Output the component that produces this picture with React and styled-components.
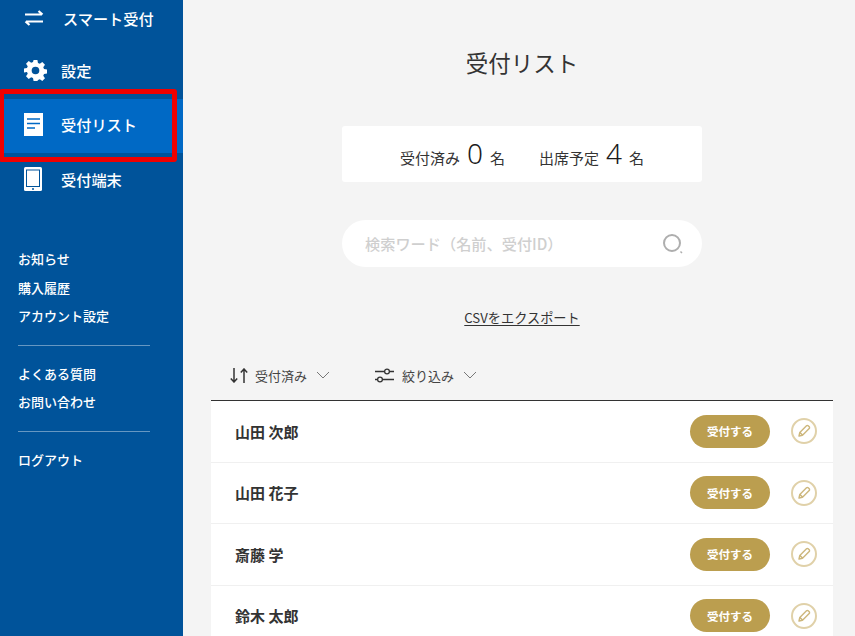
import React from "react";
import styled, { createGlobalStyle } from "styled-components";

const Global = createGlobalStyle`
  html, body { margin: 0; padding: 0; height: 100%; overflow: hidden; }
  body { font-family: "Noto Sans CJK JP", "Noto Sans", sans-serif; color: #333; background: #f4f4f4; }
  * { box-sizing: border-box; }
`;

const Page = styled.div`
  position: relative;
  display: flex;
  width: 855px;
  height: 636px;
  overflow: hidden;
`;

const Sidebar = styled.aside`
  width: 183px;
  flex: none;
  background: #00539a;
  color: #fff;
  display: flex;
  flex-direction: column;
`;

const NavList = styled.nav`
  display: flex;
  flex-direction: column;
`;

const NavItem = styled.a`
  display: flex;
  align-items: center;
  height: ${(p) => p.$h}px;
  padding: ${(p) => p.$pad || "0"};
  padding-left: 24px;
  background: ${(p) => (p.$active ? "#0069c5" : "transparent")};
  font-size: 15.2px;
  font-weight: 500;
  color: #fff;
`;

const NavIcon = styled.span`
  width: ${(p) => p.$w || 37}px;
  flex: none;
  display: flex;
  align-items: center;
  svg { display: block; }
`;

const SideLinks = styled.div`
  display: flex;
  flex-direction: column;
  padding: 39px 33px 0 18px;
`;

const SideLink = styled.a`
  display: block;
  height: 28.5px;
  line-height: 28.5px;
  font-size: 13px;
  font-weight: 500;
  color: #fff;
`;

const SideRule = styled.hr`
  border: 0;
  height: 1px;
  background: rgba(255, 255, 255, 0.4);
  margin: 14px 0;
`;

const Highlight = styled.div`
  position: absolute;
  left: -1px;
  top: 89px;
  width: 178px;
  height: 73px;
  border: 5px solid #f00000;
  border-radius: 3px;
  pointer-events: none;
`;

const Main = styled.main`
  flex: 1;
  min-width: 0;
  padding: 0 22px 0 28px;
  display: flex;
  flex-direction: column;
`;

const Title = styled.h1`
  margin: 46px 0 1px;
  height: 32px;
  line-height: 32px;
  text-align: center;
  font-size: 22.5px;
  font-weight: 400;
  color: #333;
`;

const Column = styled.div`
  width: 360px;
  align-self: center;
  display: flex;
  flex-direction: column;
`;

const Stats = styled.div`
  margin-top: 47px;
  height: 56px;
  background: #fff;
  border-radius: 3px;
  display: flex;
  justify-content: center;
  align-items: flex-start;
  gap: 34px;
  padding-top: 8px;
  font-size: 15px;
  color: #333;
`;

const Stat = styled.div`
  display: flex;
  align-items: baseline;
  gap: 7px;
`;

const StatNum = styled.span`
  font-size: 28px;
  line-height: 38px;
  font-weight: 300;
  color: #1c1c1c;
  font-family: "Noto Sans", sans-serif;
`;

const Search = styled.div`
  margin-top: 38px;
  height: 47px;
  background: #fff;
  border-radius: 24px;
  display: flex;
  align-items: center;
  justify-content: space-between;
  padding: 0 18px 0 23px;
`;

const Placeholder = styled.span`
  font-size: 15.2px;
  line-height: 20px;
  margin-top: -1px;
  color: #cfcfcf;
  font-weight: 500;
`;

const Csv = styled.a`
  margin-top: 41px;
  align-self: center;
  font-size: 13.2px;
  line-height: 19px;
  color: #333;
  text-decoration: underline;
  text-underline-offset: 2px;
`;

const Toolbar = styled.div`
  margin-top: 29px;
  height: 45px;
  flex: none;
  display: flex;
  align-items: center;
  padding: 0 0 6px 19px;
  gap: 45px;
  border-bottom: 1px solid #333;
`;

const ToolItem = styled.div`
  display: flex;
  align-items: center;
  font-size: 13px;
  color: #444;
  svg { display: block; flex: none; }
`;

const ToolLabel = styled.span`
  margin: 0 9px 0 ${(p) => p.$gap}px;
`;

const Row = styled.div`
  height: 61.5px;
  flex: none;
  background: #fff;
  display: flex;
  align-items: center;
  padding: 0 16px 0 24px;
  border-bottom: 1.5px solid #f0f0f0;
`;

const Name = styled.span`
  flex: 1;
  font-size: 15px;
  font-weight: 700;
  color: #333;
`;

const AcceptButton = styled.button`
  width: 80px;
  height: 33px;
  border: 0;
  border-radius: 17px;
  background: #bb9e4f;
  color: #fff;
  font: 700 11.5px "Noto Sans CJK JP", sans-serif;
  padding: 0;
`;

const EditButton = styled.button`
  width: 26px;
  height: 26px;
  margin-left: 21px;
  border: 2px solid #e0d1a9;
  border-radius: 50%;
  background: #fff;
  padding: 0;
  display: flex;
  align-items: center;
  justify-content: center;
`;

const Transfer = () => (
  <svg width="20" height="16" viewBox="0 0 20 16" fill="none" stroke="#fff" strokeWidth="2.2">
    <path d="M1 4.5h17M14.500 1l4 3.500M19 11.500H2M5.500 15l-4-3.500" />
  </svg>
);
const Gear = () => (
  <svg width="23" height="23" viewBox="0 0 24 24" fill="#fff">
    <path fillRule="evenodd" d="M10 1h4l.6 3.100 1.900.8 2.600-1.800 2.800 2.800-1.800 2.600.8 1.900 3.100.6v4l-3.100.6-.8 1.900 1.800 2.600-2.800 2.800-2.600-1.800-1.900.8L14 23h-4l-.6-3.100-1.900-.8-2.600 1.800-2.800-2.800 1.800-2.600-.8-1.900L0 14v-4l3.100-.6.8-1.900L2.100 4.900l2.800-2.800 2.600 1.800 1.900-.8L10 1zm2 7a4 4 0 1 0 0 8 4 4 0 0 0 0-8z" />
  </svg>
);
const Doc = () => (
  <svg width="19" height="23" viewBox="0 0 19 23">
    <rect width="19" height="23" fill="#fff" />
    <path d="M3 6h13M3 10.500h13M3 15h8" stroke="#0069c5" strokeWidth="1.500" />
  </svg>
);
const Tablet = () => (
  <svg width="18" height="24" viewBox="0 0 18 24">
    <rect width="18" height="24" rx="1.500" fill="#fff" />
    <rect x="2" y="2.500" width="14" height="17.500" fill="#00539a" />
    <rect x="3" y="3.500" width="12" height="15.500" fill="#fff" />
    <circle cx="9" cy="22" r="1" fill="#00539a" />
  </svg>
);
const SearchIcon = () => (
  <svg width="22" height="22" viewBox="0 0 22 22" fill="none" stroke="#aeaeae">
    <circle cx="10" cy="10" r="8" strokeWidth="2" />
    <path d="M18.500 18.500l1.500 1.500" strokeWidth="1.500" />
  </svg>
);
const SortIcon = () => (
  <svg width="18" height="15" viewBox="0 0 18 15" fill="none" stroke="#333" strokeWidth="1.500">
    <path d="M4 0v14M.8 10.500L4 14l3.200-3.500M14 15V1M10.800 4.500L14 1l3.200 3.500" />
  </svg>
);
const Chevron = () => (
  <svg width="14" height="8" viewBox="0 0 14 8" fill="none" stroke="#777" strokeWidth="1">
    <path d="M1 1l6 6 6-6" />
  </svg>
);
const FilterIcon = () => (
  <svg width="19" height="15" viewBox="0 0 19 15" fill="none" stroke="#333" strokeWidth="1.300">
    <path d="M0 3.500h9.500M14.500 3.500H19M0 11.500h2.500M7.500 11.500H19" />
    <circle cx="12" cy="3.500" r="2.400" />
    <circle cx="5" cy="11.500" r="2.400" />
  </svg>
);
const Pencil = () => (
  <svg width="14" height="14" viewBox="0 0 14 14" fill="none" stroke="#cdb77c" strokeWidth="1.400" strokeLinejoin="round">
    <path d="M2 12l.8-3.500L9.500 1.800a1.200 1.200 0 0 1 1.700 0l1 1a1.200 1.200 0 0 1 0 1.700L5.500 11.200 2 12zM3 8.500l2.500 2.500" />
  </svg>
);

const people = ["山田 次郎", "山田 花子", "斎藤 学", "鈴木 太郎"];

export default function App() {
  return (
    <Page>
      <Global />
      <Sidebar>
        <NavList>
          <NavItem $h={37} $pad="0 0 2px">
            <NavIcon $w={39}><Transfer /></NavIcon>
            スマート受付
          </NavItem>
          <NavItem $h={62} $pad="4px 0 0">
            <NavIcon><Gear /></NavIcon>
            設定
          </NavItem>
          <NavItem $active $h={54} $pad="0 0 4px">
            <NavIcon><Doc /></NavIcon>
            受付リスト
          </NavItem>
          <NavItem $h={53} $pad="0 0 2px">
            <NavIcon><Tablet /></NavIcon>
            受付端末
          </NavItem>
        </NavList>
        <SideLinks>
          <SideLink>お知らせ</SideLink>
          <SideLink>購入履歴</SideLink>
          <SideLink>アカウント設定</SideLink>
          <SideRule />
          <SideLink>よくある質問</SideLink>
          <SideLink>お問い合わせ</SideLink>
          <SideRule />
          <SideLink>ログアウト</SideLink>
        </SideLinks>
      </Sidebar>
      <Highlight />
      <Main>
        <Title>受付リスト</Title>
        <Column>
          <Stats>
            <Stat>受付済み <StatNum>0</StatNum> 名</Stat>
            <Stat>出席予定 <StatNum>4</StatNum> 名</Stat>
          </Stats>
          <Search>
            <Placeholder>検索ワード（名前、受付ID）</Placeholder>
            <SearchIcon />
          </Search>
          <Csv>CSVをエクスポート</Csv>
        </Column>
        <Toolbar>
          <ToolItem>
            <SortIcon />
            <ToolLabel $gap={7}>受付済み</ToolLabel>
            <Chevron />
          </ToolItem>
          <ToolItem>
            <FilterIcon />
            <ToolLabel $gap={8}>絞り込み</ToolLabel>
            <Chevron />
          </ToolItem>
        </Toolbar>
        {people.map((n) => (
          <Row key={n}>
            <Name>{n}</Name>
            <AcceptButton>受付する</AcceptButton>
            <EditButton aria-label="編集"><Pencil /></EditButton>
          </Row>
        ))}
      </Main>
    </Page>
  );
}
